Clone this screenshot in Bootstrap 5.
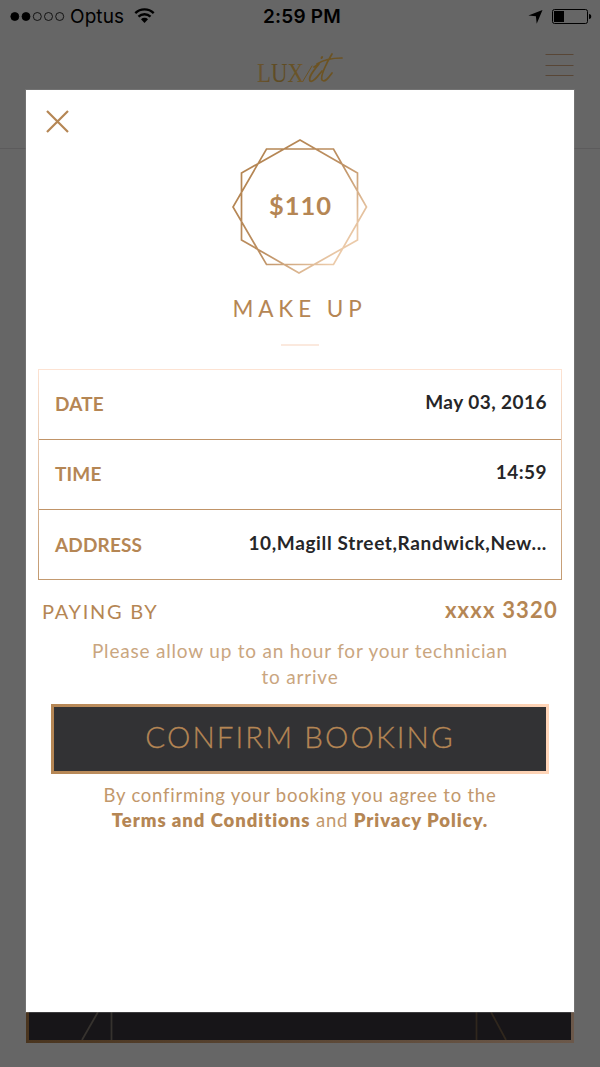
<!DOCTYPE html>
<html lang="en">
<head>
<meta charset="utf-8">
<meta name="viewport" content="width=device-width, initial-scale=1">
<title>Luxit – Confirm booking</title>
<link href="https://cdn.jsdelivr.net/npm/bootstrap@5.3.0/dist/css/bootstrap.min.css" rel="stylesheet">
<style>
:root { --gold: #b58654; }
body { font-family: Lato, "Open Sans", sans-serif; color: var(--gold); background: #666; }
.phone { width: 600px; height: 1067px; background: #666; }
.status-row { height: 43px; color: #000; font-family: Inter, sans-serif; line-height: 20px; padding-top: 6px; }
.clock { font-size: 19px; font-weight: 600; letter-spacing: .2px; left: 263px; top: 7px; white-space: nowrap; }
.carrier { font-size: 19px; letter-spacing: .1px; padding-top: 1px; }
.app-top { height: 106px; border-bottom: 1px solid #5c5b5c; }
.tile { height: 33px; margin: 0 26px 24px; border: 3px solid; border-top: 0; background: #171518;
  border-image: linear-gradient(90deg, #4a351f, #6b584a) 1; }
.sheet { left: 26px; top: 90px; width: 548px; height: 922px; background: #fff; box-shadow: 0 0 0 1px #8c8c8c55; }
.close-x { width: 24px; height: 24px; margin: 20px 0 0 20px; }
.emblem { width: 140px; height: 140px; margin-top: 3px; }
.price { font-size: 25.5px; font-weight: 700; letter-spacing: 1px; }
.service { font-size: 22.5px; letter-spacing: 4.9px; line-height: 28px; margin-top: 18px; padding-right: 1px; }
.rule { width: 38px; height: 2px; background: #fbe9de; margin-top: 21px; }
.details { margin: 23px 12px 0; height: 211px; border: 1px solid #dcb592; border-image: linear-gradient(#fde3d3, #c39a70) 1; }
.detail { height: 70px; padding: 0 14px 0 16px; border-bottom: 1px solid #c09468; font-size: 19px; font-weight: 700; }
.detail:last-child { border-bottom: 0; }
.detail-label { letter-spacing: .15px; }
.detail-value { color: #262628; position: relative; top: -2px; letter-spacing: .45px; }
.detail-address { letter-spacing: .64px; }
.paying { margin: 16px 16px 0; height: 29px; }
.paying-label { font-size: 20px; letter-spacing: 1.7px; padding-top: 1px; }
.paying-card { font-size: 22px; font-weight: 700; letter-spacing: 1.2px; padding-bottom: 2px; }
.note { font-size: 19px; line-height: 26px; letter-spacing: .8px; color: #caa67f; margin-top: 13px; }
.confirm { width: 498px; height: 70px; margin-top: 14px; border: 3px solid; border-radius: 0; background: #323234;
  border-image: linear-gradient(90deg, #b58654, #ffd5b8) 1; color: var(--gold); font-size: 29.5px; font-weight: 300; letter-spacing: 2.1px; line-height: 60px; padding: 0 0 4px; -webkit-text-stroke: .3px var(--gold); }
.terms { font-size: 18.5px; line-height: 24.5px; letter-spacing: .77px; color: #c2986c; margin-top: 9px; }
.terms b { color: var(--gold); font-weight: 800; letter-spacing: .95px; }
</style>
</head>
<body>
<div class="phone position-relative overflow-hidden d-flex flex-column">
  <div class="status-row d-flex justify-content-between">
    <div class="d-flex ps-2">
      <svg width="58" height="20" viewBox="8 6 58 20"><g stroke="#000" stroke-width=".8" fill="none"><circle cx="14.800" cy="16.500" r="4" fill="#000"/><circle cx="26" cy="16.500" r="4" fill="#000"/><circle cx="37.300" cy="16.500" r="4"/><circle cx="48.500" cy="16.500" r="4"/><circle cx="59.700" cy="16.500" r="4"/></g></svg>
      <span class="carrier ms-1">Optus</span>
      <svg class="ms-2" width="24" height="20" viewBox="132 6 24 20" fill="none" stroke="#000" stroke-width="2.400"><path d="M135.300 13.100a13.200 13.200 0 0 1 18.400 0M138.500 16.600a8.700 8.700 0 0 1 12 0"/><path d="M141 19.300a5 5 0 0 1 7 0L144.500 23z" fill="#000" stroke="none"/></svg>
    </div>
    <span class="clock position-absolute">2:59 PM</span>
    <svg width="72" height="20" viewBox="528 6 72 20"><path d="M542.500 10l-5.800 13.700-.8-7.500-7.500-.6z"/><rect x="552.500" y="9.500" width="35" height="14" rx="2" fill="none" stroke="#000"/><path d="M554 11h10v11h-10zM589 14c3 0 3 5 0 5z"/></svg>
  </div>
  <div class="app-top d-flex justify-content-center">
    <svg width="96" height="44" viewBox="252 43 96 44">
      <defs><linearGradient id="lg" x1="0" x2="1"><stop stop-color="#6a5430"/><stop offset=".5" stop-color="#5d4a22"/><stop offset="1" stop-color="#70592c"/></linearGradient></defs>
      <text x="257" y="81.500" fill="url(#lg)" font-family="Liberation Serif, serif" font-size="27" textLength="47" lengthAdjust="spacingAndGlyphs">LUX</text>
      <g fill="none" stroke="#6c5323" stroke-width="1.700" stroke-linecap="round" stroke-linejoin="round"><path d="M314 67l5-3c-5 6-11 13-9 17 3 2 8-5 12-10"/><path d="M332 54c-5 8-12 22-10 26 3 3 7-3 10-7M317 64c6-4 14-6 25-6"/><path d="M321.500 58l.6-1" stroke-width="2"/><path d="M312 66c-3 5-6 10-9 15" stroke-width="1"/></g>
    </svg>
    <svg class="position-absolute end-0" width="60" height="44" viewBox="540 43 60 44"><path d="M545.500 54.500h28M545.500 65.500h28M545.500 75.500h28" stroke="#584636"/></svg>
  </div>
  <div class="flex-grow-1"></div>
  <div class="tile"><svg class="d-block" width="542" height="30" viewBox="29 1010 542 30" fill="none" stroke-width="1.800"><path d="M98 1012l-16 28M111.500 1010v30" stroke="#36322e"/><path d="M476.500 1010v30M491 1012l15 28" stroke="#30271d"/></svg></div>

  <div class="sheet position-absolute d-flex flex-column align-items-center">
    <svg class="close-x align-self-start" viewBox="0 0 24 24" stroke="#b58654" stroke-width="2.200"><path d="M1 1l21 21M22 1L1 22"/></svg>
    <svg class="emblem" viewBox="230 137 140 140" fill="none">
      <defs><linearGradient id="gg" gradientUnits="userSpaceOnUse" x1="262" y1="172" x2="347" y2="244"><stop stop-color="#b58654"/><stop offset=".5" stop-color="#bd9063"/><stop offset="1" stop-color="#ebcaa9"/></linearGradient></defs>
      <g stroke="url(#gg)" stroke-width="1.700"><path d="M300 140l57.500 33v67L299 273l-57.500-33v-67zM266.500 149h67L366.500 207l-33 57.500h-67L233 207z"/></g>
      <text class="price" x="300.500" y="215" text-anchor="middle" fill="#b58654">$110</text>
    </svg>
    <div class="service">MAKE UP</div>
    <div class="rule"></div>
    <div class="details align-self-stretch">
      <div class="detail d-flex align-items-center justify-content-between"><span class="detail-label">DATE</span><span class="detail-value">May 03, 2016</span></div>
      <div class="detail d-flex align-items-center justify-content-between"><span class="detail-label">TIME</span><span class="detail-value">14:59</span></div>
      <div class="detail d-flex align-items-center justify-content-between"><span class="detail-label">ADDRESS</span><span class="detail-value detail-address">10,Magill Street,Randwick,New...</span></div>
    </div>
    <div class="paying align-self-stretch d-flex justify-content-between align-items-center"><span class="paying-label">PAYING BY</span><span class="paying-card">xxxx 3320</span></div>
    <div class="note text-center">Please allow up to an hour for your technician<br>to arrive</div>
    <button type="button" class="confirm btn flex-shrink-0">CONFIRM BOOKING</button>
    <div class="terms text-center">By confirming your booking you agree to the<br><b>Terms and Conditions</b> and <b>Privacy Policy.</b></div>
  </div>
</div>
<script src="https://cdn.jsdelivr.net/npm/bootstrap@5.3.0/dist/js/bootstrap.bundle.min.js"></script>
</body>
</html>
